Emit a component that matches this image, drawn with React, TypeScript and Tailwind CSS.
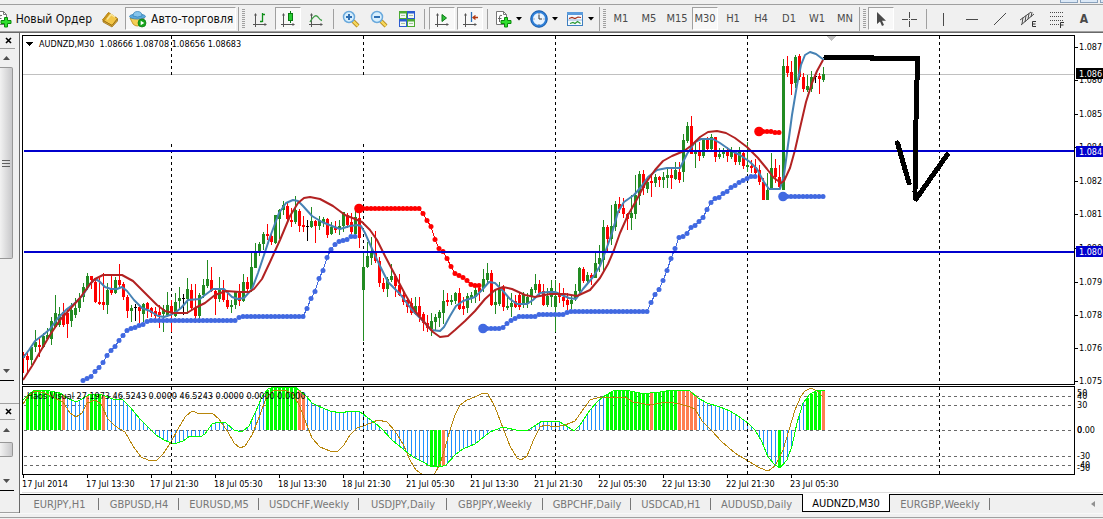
import React from "react";

type Tone = "g" | "r" | "k";
type Candle = [high: number, top: number, bottom: number, low: number, tone: Tone];
type Point = [x: number, y: number];

const STEP = 4;
const FIRST_X = 23;

const candles: Candle[] = [
  [352, 354, 358, 373, "r"], [353, 356, 360, 373, "r"], [345, 347, 360, 365, "g"], [330, 342, 347, 352, "g"],
  [338, 345, 347, 357, "r"], [333, 336, 347, 348, "g"], [328, 335, 339, 340, "g"], [317, 321, 339, 345, "g"],
  [295, 313, 327, 328, "g"], [307, 314, 325, 327, "g"], [303, 312, 325, 327, "r"], [309, 313, 324, 338, "r"],
  [303, 310, 321, 327, "g"], [298, 308, 315, 318, "g"], [293, 298, 308, 312, "g"], [283, 287, 297, 302, "g"],
  [273, 276, 288, 290, "g"], [276, 276, 280, 289, "r"], [280, 282, 302, 303, "r"], [278, 302, 304, 305, "r"],
  [273, 302, 305, 310, "r"], [283, 290, 305, 314, "g"], [275, 289, 293, 295, "r"], [277, 280, 293, 294, "g"],
  [264, 280, 285, 288, "r"], [282, 284, 297, 300, "r"], [295, 297, 311, 318, "r"], [305, 308, 311, 322, "g"],
  [304, 307, 308, 321, "k"], [305, 307, 311, 323, "r"], [303, 304, 314, 322, "g"], [302, 303, 309, 318, "r"],
  [307, 308, 313, 317, "r"], [307, 311, 316, 322, "r"], [305, 312, 315, 328, "r"], [305, 309, 314, 332, "g"],
  [292, 305, 315, 317, "g"], [300, 306, 313, 332, "r"], [293, 302, 316, 317, "g"], [287, 298, 301, 310, "g"],
  [294, 298, 299, 315, "k"], [278, 289, 299, 314, "g"], [284, 290, 308, 311, "r"], [284, 308, 316, 323, "r"],
  [293, 295, 316, 323, "g"], [279, 285, 295, 298, "g"], [260, 279, 286, 288, "g"], [267, 280, 291, 292, "r"],
  [288, 291, 299, 315, "r"], [277, 288, 299, 302, "g"], [280, 290, 300, 302, "r"], [293, 300, 307, 309, "r"],
  [300, 305, 307, 313, "g"], [291, 292, 305, 309, "g"], [284, 293, 301, 306, "r"], [274, 282, 301, 302, "g"],
  [277, 282, 289, 293, "r"], [253, 267, 289, 292, "g"], [243, 253, 268, 268, "g"], [242, 244, 252, 256, "g"],
  [232, 234, 244, 250, "g"], [224, 234, 236, 240, "r"], [232, 236, 242, 245, "r"], [215, 215, 243, 244, "g"],
  [209, 210, 219, 239, "g"], [201, 205, 210, 215, "g"], [202, 206, 219, 222, "r"], [208, 220, 222, 227, "r"],
  [196, 210, 222, 224, "g"], [209, 211, 226, 232, "r"], [216, 225, 227, 232, "r"], [220, 226, 227, 241, "k"],
  [207, 221, 227, 228, "g"], [220, 221, 226, 243, "r"], [216, 220, 226, 230, "g"], [217, 219, 222, 227, "g"],
  [218, 219, 235, 238, "r"], [222, 227, 234, 235, "g"], [221, 227, 230, 233, "r"], [220, 226, 228, 235, "g"],
  [212, 212, 226, 232, "g"], [213, 215, 225, 228, "r"], [213, 222, 232, 234, "r"], [207, 217, 234, 237, "g"],
  [213, 218, 238, 248, "r"], [252, 267, 290, 341, "g"], [242, 256, 267, 268, "g"], [237, 253, 258, 265, "g"],
  [231, 252, 261, 263, "r"], [257, 261, 283, 287, "r"], [278, 283, 289, 292, "r"], [277, 279, 289, 297, "g"],
  [264, 276, 280, 282, "g"], [274, 276, 286, 297, "r"], [274, 285, 295, 296, "r"], [292, 295, 302, 305, "r"],
  [297, 300, 307, 313, "r"], [298, 303, 313, 315, "r"], [297, 306, 314, 315, "g"], [297, 306, 316, 322, "r"],
  [312, 314, 323, 331, "r"], [315, 323, 328, 332, "r"], [313, 321, 329, 336, "g"], [314, 317, 322, 330, "g"],
  [310, 312, 318, 327, "g"], [290, 301, 313, 324, "g"], [293, 300, 302, 306, "r"], [295, 300, 302, 305, "g"],
  [292, 293, 301, 304, "g"], [288, 293, 309, 310, "r"], [297, 306, 309, 315, "r"], [293, 296, 308, 313, "g"],
  [292, 295, 298, 303, "g"], [287, 290, 297, 303, "g"], [285, 288, 292, 301, "r"], [269, 279, 288, 292, "g"],
  [263, 273, 280, 283, "g"], [270, 273, 305, 306, "r"], [290, 302, 305, 314, "g"], [282, 288, 304, 306, "g"],
  [285, 288, 307, 311, "r"], [295, 306, 308, 310, "g"], [293, 303, 307, 317, "g"], [295, 301, 307, 308, "r"],
  [292, 295, 307, 310, "r"], [292, 295, 305, 308, "g"], [293, 297, 304, 308, "g"], [287, 289, 297, 305, "g"],
  [274, 284, 290, 293, "g"], [280, 284, 293, 296, "r"], [284, 291, 305, 306, "r"], [288, 296, 305, 307, "g"],
  [280, 288, 297, 307, "g"], [280, 296, 307, 332, "g"], [283, 294, 297, 303, "r"], [288, 297, 301, 307, "r"],
  [293, 300, 305, 310, "r"], [295, 300, 304, 309, "g"], [284, 291, 299, 301, "g"], [267, 268, 291, 293, "g"],
  [267, 269, 281, 283, "r"], [272, 275, 281, 283, "g"], [273, 275, 278, 285, "r"], [252, 263, 278, 278, "g"],
  [245, 258, 264, 272, "g"], [220, 227, 260, 272, "g"], [225, 227, 239, 253, "r"], [205, 226, 239, 245, "g"],
  [201, 204, 227, 231, "g"], [197, 204, 209, 213, "r"], [198, 208, 214, 218, "r"], [213, 214, 219, 230, "r"],
  [195, 213, 218, 230, "g"], [175, 195, 214, 219, "g"], [171, 174, 196, 205, "g"], [170, 174, 188, 195, "r"],
  [177, 182, 189, 193, "g"], [173, 181, 183, 197, "r"], [174, 177, 183, 187, "g"], [176, 177, 180, 187, "r"],
  [172, 177, 180, 188, "g"], [168, 175, 178, 188, "g"], [169, 175, 178, 189, "r"], [162, 170, 179, 180, "g"],
  [162, 172, 180, 183, "r"], [134, 140, 172, 182, "g"], [122, 126, 141, 143, "g"], [116, 126, 154, 154, "r"],
  [142, 152, 154, 168, "g"], [142, 151, 156, 161, "r"], [138, 140, 156, 158, "g"], [137, 139, 149, 152, "r"],
  [134, 137, 149, 151, "g"], [137, 137, 157, 162, "r"], [148, 154, 157, 159, "g"], [148, 151, 154, 158, "g"],
  [147, 151, 156, 162, "r"], [147, 150, 157, 159, "g"], [150, 153, 162, 165, "r"], [147, 151, 162, 165, "g"],
  [150, 153, 166, 169, "r"], [142, 165, 167, 172, "g"], [160, 166, 168, 173, "r"], [159, 167, 173, 177, "r"],
  [165, 170, 182, 185, "r"], [178, 182, 200, 200, "r"], [173, 190, 200, 200, "g"], [153, 168, 189, 190, "g"],
  [159, 168, 177, 183, "r"], [165, 177, 187, 189, "r"], [59, 66, 190, 190, "g"], [56, 66, 73, 77, "r"],
  [61, 72, 84, 95, "r"], [55, 57, 83, 88, "g"], [54, 56, 77, 80, "r"], [73, 77, 89, 92, "r"],
  [75, 86, 90, 92, "g"], [71, 77, 89, 92, "g"], [73, 76, 77, 83, "k"], [73, 76, 79, 94, "r"],
  [67, 74, 80, 82, "g"],
];

const fastAverage: Point[] = [
  [23, 358], [29, 350], [35, 341], [43, 335], [50, 329], [58, 318], [67, 309], [75, 303], [83, 295], [90, 284],
  [95, 279], [99, 281], [105, 287], [111, 289], [117, 289], [122, 287], [127, 291], [134, 300], [142, 308],
  [150, 311], [158, 316], [164, 317], [170, 315], [176, 312], [181, 308], [188, 300], [200, 299], [205, 295],
  [213, 289], [224, 289], [232, 297], [238, 299], [244, 298], [252, 289], [258, 273], [263, 258], [270, 237],
  [279, 213], [286, 203], [293, 200], [298, 201], [303, 206], [312, 216], [322, 222], [332, 226], [340, 229],
  [350, 226], [357, 225], [361, 226], [365, 233], [373, 251], [380, 266], [388, 282], [400, 294], [412, 310],
  [425, 323], [431, 330], [440, 331], [444, 327], [450, 316], [456, 306], [463, 301], [475, 297], [482, 290],
  [489, 282], [495, 283], [503, 291], [510, 299], [517, 304], [527, 304], [533, 300], [540, 293], [548, 292],
  [555, 292], [562, 295], [569, 298], [576, 299], [583, 289], [593, 277], [600, 266], [606, 250], [612, 233],
  [618, 212], [624, 202], [634, 195], [641, 187], [648, 177], [657, 170], [667, 168], [680, 168], [687, 154],
  [695, 142], [701, 139], [713, 139], [720, 143], [730, 150], [740, 155], [750, 162], [757, 169], [764, 182],
  [769, 189], [780, 189], [784, 175], [788, 145], [792, 115], [797, 85], [801, 65], [805, 55], [810, 52],
  [816, 54], [824, 60],
];

const slowAverage: Point[] = [
  [23, 380], [32, 366], [40, 352], [50, 335], [60, 320], [70, 309], [80, 298], [90, 284], [95, 279], [103, 275],
  [122, 275], [133, 281], [145, 293], [157, 305], [165, 311], [173, 313], [187, 313], [195, 308], [205, 303],
  [215, 295], [226, 291], [240, 292], [249, 292], [254, 289], [262, 279], [270, 262], [280, 240], [290, 216],
  [298, 203], [304, 198], [310, 197], [320, 199], [333, 206], [345, 215], [355, 219], [362, 222], [370, 230],
  [377, 240], [385, 256], [395, 275], [405, 294], [415, 311], [425, 323], [433, 332], [440, 337], [448, 336],
  [455, 330], [465, 321], [475, 311], [485, 299], [495, 290], [503, 287], [512, 289], [525, 295], [535, 297],
  [550, 294], [565, 294], [577, 296], [590, 290], [600, 278], [608, 264], [614, 250], [620, 233], [628, 215],
  [636, 201], [645, 184], [655, 170], [663, 161], [672, 156], [684, 151], [692, 145], [700, 137], [708, 132],
  [717, 131], [726, 133], [735, 138], [747, 147], [758, 158], [767, 169], [774, 178], [781, 183], [784, 181],
  [790, 168], [795, 150], [800, 128], [806, 102], [812, 83], [817, 71], [823, 60],
];

const flat = (count: number, y: number): number[] => Array.from({ length: count }, () => y);

type Trail = { start: number; ys: number[]; color: string; opensTrend: boolean };

const trails: Trail[] = [
  {
    start: 83,
    color: "#4169e1",
    opensTrend: false,
    ys: [
      380, 378, 376, 371, 367, 362, 355, 350, 346, 340, 335, 330, 328, 327, 325, 324, 321, ...flat(22, 320), 317,
      ...flat(16, 316), 308, 298, 291, 278, 270, 257, 249, 244, 241, 240, 239, 236, 236,
    ],
  },
  {
    start: 359,
    color: "#ff0000",
    opensTrend: true,
    ys: [...flat(16, 208), 213, 220, 226, 239, 248, 251, 258, 266, 273, 275, 277, 280, 284, 285, 285],
  },
  {
    start: 483,
    color: "#4169e1",
    opensTrend: true,
    ys: [
      ...flat(5, 328), 327, 323, 320, 318, ...flat(5, 316), ...flat(7, 314), 312, ...flat(20, 311), 302, 294, 289,
      280, 270, 258, 248, 237, 236, 233, 227, 225, 221, 217, 209, 202, 198, 197, 193, 191, 187, 185, 182, 180, 178,
      176, 176,
    ],
  },
  { start: 759, color: "#ff0000", opensTrend: true, ys: [131, 131, 131, 131, 132, 132] },
  { start: 783, color: "#4169e1", opensTrend: true, ys: flat(11, 196) },
];

const oscillator: Point[] = [
  [23, 400], [28, 395], [33, 391], [38, 390], [50, 391], [60, 393], [67, 398], [76, 402], [82, 399], [90, 394],
  [102, 395], [113, 399], [122, 399], [130, 407], [140, 419], [148, 427], [156, 435], [164, 440], [174, 444],
  [183, 441], [190, 436], [200, 437], [205, 434], [212, 424], [218, 422], [226, 423], [234, 430], [242, 432],
  [249, 426], [255, 413], [262, 397], [268, 389], [275, 387], [295, 387], [300, 391], [306, 396], [312, 403],
  [318, 406], [330, 411], [341, 413], [350, 411], [359, 411], [363, 414], [375, 423], [382, 429], [392, 440],
  [403, 449], [413, 457], [423, 462], [430, 466], [440, 467], [446, 465], [455, 455], [463, 449], [475, 444],
  [485, 436], [490, 432], [503, 427], [520, 431], [528, 430], [533, 427], [542, 421], [550, 421], [560, 422],
  [568, 427], [574, 431], [580, 425], [590, 410], [598, 401], [606, 395], [613, 391], [620, 390], [630, 391],
  [640, 393], [650, 393], [660, 392], [672, 390], [690, 391], [698, 398], [707, 403], [720, 407], [730, 411],
  [738, 416], [748, 423], [755, 430], [762, 442], [768, 457], [775, 465], [780, 468], [787, 460], [792, 446],
  [797, 423], [803, 403], [810, 394], [816, 391], [825, 390],
];

const signal: Point[] = [
  [23, 404], [28, 396], [35, 391], [45, 393], [55, 398], [63, 402], [70, 413], [76, 417], [82, 413], [87, 403],
  [95, 400], [101, 404], [108, 419], [115, 426], [125, 432], [133, 446], [141, 457], [148, 460], [157, 460],
  [163, 454], [171, 442], [178, 429], [185, 417], [192, 411], [200, 414], [212, 413], [219, 419], [228, 432],
  [234, 443], [240, 448], [245, 446], [252, 435], [260, 415], [266, 398], [274, 390], [285, 390], [293, 394],
  [300, 407], [306, 423], [312, 438], [320, 447], [330, 451], [338, 451], [344, 445], [350, 435], [357, 428],
  [366, 425], [378, 420], [387, 422], [395, 431], [403, 444], [410, 460], [416, 470], [423, 475], [434, 475],
  [440, 464], [445, 448], [450, 430], [455, 415], [460, 405], [467, 400], [475, 397], [483, 393], [488, 394],
  [495, 407], [503, 428], [510, 446], [517, 458], [521, 460], [527, 456], [534, 439], [540, 427], [545, 425],
  [555, 427], [565, 425], [575, 421], [582, 411], [590, 400], [600, 397], [625, 397], [633, 402], [645, 404],
  [655, 404], [668, 402], [680, 404], [690, 407], [695, 409], [702, 421], [712, 431], [722, 442], [735, 453],
  [748, 461], [760, 468], [768, 471], [775, 466], [783, 450], [789, 430], [795, 410], [801, 396], [805, 391],
  [811, 388], [817, 391], [823, 397],
];

const strongBars: [number, number][] = [[27, 59], [91, 99], [267, 295], [431, 439], [607, 647], [655, 675], [779, 779], [807, 819]];
const fadingBars: [number, number][] = [[63, 63], [87, 87], [103, 103], [299, 303], [443, 443], [651, 651], [679, 695], [823, 823]];

const dayBreaks = [171, 363, 555, 747, 939];
const prices: [string, number][] = [
  ["1.087", 47], ["1.086", 80], ["1.085", 114], ["1.084", 147], ["1.082", 181], ["1.081", 214], ["1.080", 248],
  ["1.079", 282], ["1.078", 315], ["1.076", 348], ["1.075", 381],
];
const times = [
  "17 Jul 2014", "17 Jul 13:30", "17 Jul 21:30", "18 Jul 05:30", "18 Jul 13:30", "18 Jul 21:30", "21 Jul 05:30",
  "21 Jul 13:30", "21 Jul 21:30", "22 Jul 05:30", "22 Jul 13:30", "22 Jul 21:30", "23 Jul 05:30",
];

const toneColor: Record<Tone, string> = { g: "#228b22", r: "#ff0000", k: "#000000" };

const within = (ranges: [number, number][], x: number) => ranges.some(([a, b]) => x >= a && x <= b);

function valueAt(points: Point[], x: number): number {
  for (let i = 1; i < points.length; i++) {
    const [x0, y0] = points[i - 1];
    const [x1, y1] = points[i];
    if (x <= x1) return Math.round(y0 + ((y1 - y0) * (x - x0)) / (x1 - x0));
  }
  return points[points.length - 1][1];
}

const toPath = (points: Point[]) => points.map(([x, y]) => `${x},${y}`).join(" ");

function PricePane() {
  return (
    <svg className="block h-full w-full" role="img" aria-label="AUDNZD M30" shapeRendering="crispEdges">
      <rect x={0} y={38} width="100%" height={1} fill="#c0c0c0" />
      <g transform="translate(-23 -36)">
        {dayBreaks.map((x) => (
          <g key={x} stroke="#000" strokeDasharray="3 3">
            {x < 400 ? (
              <>
                <line x1={x + 0.5} x2={x + 0.5} y1={36} y2={78} />
                <line x1={x + 0.5} x2={x + 0.5} y1={144} y2={384} />
              </>
            ) : (
              <line x1={x + 0.5} x2={x + 0.5} y1={36} y2={384} />
            )}
          </g>
        ))}
        {candles.map(([high, top, bottom, low, tone], i) => {
          const x = FIRST_X + i * STEP;
          return (
            <g key={x} fill={toneColor[tone]}>
              <rect x={x} y={high} width={1} height={low - high} />
              <rect x={x - 1} y={top} width={3} height={bottom - top} />
            </g>
          );
        })}
        <g fill="none" strokeWidth={2} strokeLinejoin="round" shapeRendering="auto">
          <polyline points={toPath(fastAverage)} stroke="#4682b4" />
          <polyline points={toPath(slowAverage)} stroke="#b22222" />
        </g>
        {trails.map(({ start, ys, color, opensTrend }) => (
          <g key={start} fill={color}>
            <polyline
              points={ys.map((y, i) => `${start + i * STEP},${y + 0.5}`).join(" ")}
              fill="none"
              stroke={color}
            />
            {ys.map((y, i) => (
              <circle
                key={i}
                cx={start + i * STEP}
                cy={y + 0.5}
                r={opensTrend && i === 0 ? 4.8 : 2.5}
                shapeRendering="auto"
              />
            ))}
          </g>
        ))}
        <polygon points="826,36 836,36 831,41" fill="#c0c0c0" />
        <polygon points="26,42 33,42 29.5,46" fill="#000" />
      </g>
      <rect x={1} y={114} width="100%" height={2} fill="#0000cd" />
      <rect x={1} y={215} width="100%" height={2} fill="#0000cd" />
      <g transform="translate(-23 -36)" fill="none" stroke="#000" strokeWidth={5} strokeLinecap="round" strokeLinejoin="round">
        <path d="M826 57.5H872L872 58.5H918L917 80L915.5 140L915 192L916 198" />
        <path d="M897.500 143L909 183M947 155L916 199" />
      </g>
      <text x={16} y={11} className="text-[9px]" xmlSpace="preserve">
        {"AUDNZD,M30  1.08666 1.08708 1.08656 1.08683"}
      </text>
    </svg>
  );
}

function OscillatorPane() {
  const bars = candles.map((_, i) => FIRST_X + i * STEP).slice(1);
  return (
    <svg className="block h-full w-full" role="img" aria-label="Haos Visual" shapeRendering="crispEdges">
      {[396, 405, 430, 456, 465].map((y) => (
        <line key={y} x1={1} x2="100%" y1={y - 386.5} y2={y - 386.5} stroke="#696969" strokeDasharray="3 3" />
      ))}
      <g transform="translate(-23 -387)">
        {bars.map((x) => {
          const y = valueAt(oscillator, x);
          const top = Math.min(y, 430);
          const height = Math.abs(430 - y);
          if (within(strongBars, x)) return <rect key={x} x={x - 1} y={top} width={3} height={height} fill="#00ff00" />;
          if (within(fadingBars, x)) return <rect key={x} x={x - 1} y={top} width={3} height={height} fill="#ff7f50" />;
          return <rect key={x} x={x} y={top} width={1} height={height} fill="#1e90ff" />;
        })}
        <polyline points={toPath(signal)} fill="none" stroke="#b8860b" />
        <polyline points={toPath(oscillator)} fill="none" stroke="#00ff00" />
        {dayBreaks.map((x) => (
          <line key={x} x1={x + 0.5} x2={x + 0.5} y1={387} y2={474} stroke="#000" strokeDasharray="3 3" />
        ))}
      </g>
      <text x={4} y={12} className="text-[9px]">
        Haos Visual 27.1973 46.5243 0.0000 46.5243 0.0000 0.0000 0.0000
      </text>
    </svg>
  );
}

function PriceAxis() {
  return (
    <svg className="block h-[350px] w-[28px] shrink-0 text-[9px]" role="img" aria-label="Price scale" shapeRendering="crispEdges">
      <g transform="translate(0 -35)">
        {prices.map(([label, y]) => (
          <g key={label}>
            <rect x={0} y={y} width={3} height={1} />
            <text x={4} y={y + 3}>{label}</text>
          </g>
        ))}
        <rect x={1} y={68} width={28} height={11} />
        <text x={4} y={77} fill="#fff">1.086</text>
        <rect x={1} y={146} width={28} height={11} fill="#0000cd" />
        <text x={4} y={155} fill="#fff">1.084</text>
        <rect x={1} y={246} width={28} height={11} fill="#0000cd" />
        <text x={4} y={255} fill="#fff">1.080</text>
      </g>
    </svg>
  );
}

function OscillatorAxis() {
  const labels: [string, number][] = [
    ["50", 393], ["40", 396], ["30", 405], ["0", 430], ["0.00", 430], ["-30", 456], ["-40", 465], ["-50", 468],
  ];
  return (
    <svg className="block h-[89px] w-[28px] shrink-0 text-[9px]" role="img" aria-label="Indicator scale">
      <g transform="translate(0 -386)">
        {labels.map(([label, y]) => (
          <text key={label} x={2} y={y + 3}>{label}</text>
        ))}
      </g>
    </svg>
  );
}

/* ---------- toolbar ---------- */

function Icon({ children, size = 18 }: { children: React.ReactNode; size?: number }) {
  return (
    <svg width={size} height={size} viewBox={`0 0 ${size} ${size}`} fill="none" aria-hidden="true" className="shrink-0">
      {children}
    </svg>
  );
}

const Tool = ({ label, pressed, children }: { label: string; pressed?: boolean; children: React.ReactNode }) => (
  <div className="flex w-7 shrink-0 justify-center">
    <button
      type="button"
      aria-label={label}
      aria-pressed={pressed ? true : undefined}
      className={
        pressed
          ? "flex h-[23px] w-[26px] items-center justify-center border border-white border-t-[#a0a0a0] border-l-[#a0a0a0] bg-[#f8f8f8]"
          : "flex h-[23px] w-[26px] items-center justify-center"
      }
    >
      {children}
    </button>
  </div>
);

const DropTool = ({ label, children }: { label: string; children: React.ReactNode }) => (
  <button type="button" aria-label={label} className="flex h-[23px] w-9 shrink-0 items-center gap-1 pl-[3px]">
    {children}
    <svg width="6" height="4" viewBox="0 0 6 4" aria-hidden="true"><path d="M0 0H6L3 3.500Z" fill="#000" /></svg>
  </button>
);

const Separator = () => <span className="mx-[3px] h-5 w-px shrink-0 bg-[#a0a0a0]" />;

const Grip = () => (
  <span className="mr-px ml-[3px] h-5 w-[3px] shrink-0 bg-[repeating-linear-gradient(#a0a0a0_0_1px,#f0f0f0_1px_2px)]" />
);

const Axes = () => (
  <>
    <path d="M4.500 4V17M2 14.500H15" stroke="#555" />
    <path d="M3 5.500L4.500 3L6 5.500ZM13.500 13L16 14.500L13.500 16Z" fill="#555" />
  </>
);

const Magnifier = ({ plus }: { plus?: boolean }) => (
  <Icon>
    <path d="M11 11L16 16" stroke="#a87a10" strokeWidth="4" />
    <path d="M11 11L16 16" stroke="#f5d65a" strokeWidth="2.500" />
    <circle cx="7" cy="7" r="5.500" fill="#d8effd" stroke="#6aa9dc" strokeWidth="1.500" />
    <path d={plus ? "M4 7H10M7 4V10" : "M4 7H10"} stroke="#2f6fb3" strokeWidth="2" />
  </Icon>
);

const SheetPlus = () => (
  <>
    <path d="M2.500 1.500H9.500L12.500 4.500V14.500H2.500Z" fill="#fff" stroke="#777" />
    <path d="M9.500 1.500V4.500H12.500" stroke="#777" />
    <path d="M8 5.500Q5.500 4.500 5.500 7V12M4 8.500H7.500" stroke="#666" />
    <path d="M10.500 7.500H13.500V10.500H17V13.500H13.500V17H10.500V13.500H7V10.500H10.500Z" fill="#2ee02e" stroke="#0a8a0a" />
  </>
);

function Toolbar() {
  return (
    <header className="h-[33px] shrink-0 border-b border-[#696969] bg-[#f0f0f0]">
      <div className="flex h-1 justify-end gap-[2px] overflow-hidden">
        <span className="h-[3px] w-[18px] border border-t-0 border-[#8aa2bd] bg-[#dce9f7]" />
        <span className="h-[3px] w-[18px] border border-t-0 border-[#8aa2bd] bg-[#dce9f7]" />
        <span className="h-[3px] w-[3px] border border-t-0 border-r-0 border-[#8aa2bd] bg-[#dce9f7]" />
      </div>
      <div className="flex h-7 items-center overflow-hidden border-t border-b border-[#a0a0a0] pt-px text-[#4a4a4a]">
        <button type="button" className="flex h-[23px] w-24 shrink-0 items-center justify-end pr-1 text-[12px] whitespace-nowrap text-[#101010]">
          <span className="flex w-[17px] shrink-0 justify-end overflow-hidden pr-1">
            <Icon><SheetPlus /></Icon>
          </span>
          Новый Ордер
        </button>
        <Tool label="Metaeditor">
          <Icon>
            <path d="M1.500 10L7.500 2.500L16.500 8.500L11 15.500Z" fill="#f2c648" stroke="#a8780f" />
            <path d="M1.500 10L7.500 2.500L9 3.500L3.500 11Z" fill="#c8921c" />
            <path d="M2 10.500L11 15.500L16.500 9V11L11 17L2 12Z" fill="#e5b133" stroke="#8d6410" strokeWidth=".7" />
            <path d="M6 9.500L10 4.500L14 7.200" stroke="#fae597" strokeWidth="1.500" />
          </Icon>
        </Tool>
        <button
          type="button"
          aria-pressed="true"
          className="ml-px flex h-[23px] w-[111px] shrink-0 items-center gap-1 border border-white border-t-[#a0a0a0] border-l-[#a0a0a0] bg-[#f8f8f8] pl-[3px] text-[12px] whitespace-nowrap text-[#101010]"
        >
          <Icon>
            <path d="M1 8H15L13 14Q8 18 4 14Z" fill="#f5cf55" stroke="#b98a16" strokeWidth=".8" />
            <ellipse cx="8.500" cy="6.500" rx="8" ry="2.600" fill="#5da9dc" stroke="#2e7db3" strokeWidth=".7" />
            <path d="M4 6Q4 1.500 8.500 1.500Q13 1.500 13 6Q8.500 8 4 6Z" fill="#86c5ec" stroke="#2e7db3" strokeWidth=".7" />
            <circle cx="13" cy="13" r="4" fill="#16a51c" stroke="#0b7a10" strokeWidth=".7" />
            <path d="M11.700 10.700L15.300 13L11.700 15.300Z" fill="#fff" />
          </Icon>
          Авто-торговля
        </button>
        <span className="ml-[2px] h-6 w-px shrink-0 bg-[#a0a0a0]" />
        <Grip />
        <Tool label="Bar chart"><Icon><Axes /><path d="M11.500 3V12M11.500 4.500H14M9 11.500H11.500" stroke="#0f8f1a" strokeWidth="1.300" /></Icon></Tool>
        <Tool label="Candlesticks" pressed><Icon><Axes /><path d="M11.500 1V13" stroke="#0a7a12" /><rect x="9.500" y="3.500" width="4" height="7" fill="#27cc33" stroke="#0a7a12" /></Icon></Tool>
        <Tool label="Line chart"><Icon><Axes /><path d="M3 12Q8 3 11 7Q13 10 15 10.500" stroke="#3c9c44" strokeWidth="1.300" /></Icon></Tool>
        <Separator />
        <Tool label="Zoom in"><Magnifier plus /></Tool>
        <Tool label="Zoom out"><Magnifier /></Tool>
        <Tool label="Tile windows">
          <Icon>
            <rect x="1" y="1" width="8" height="8" fill="#4caa32" /><rect x="9" y="1" width="8" height="8" fill="#2b5cd0" />
            <rect x="1" y="9" width="8" height="8" fill="#2b5cd0" /><rect x="9" y="9" width="8" height="8" fill="#4caa32" />
            <path d="M2 3.500H8V8H2ZM10 3.500H16V8H10ZM2 11.500H8V16H2ZM10 11.500H16V16H10Z" fill="#f3f8f3" />
            <path d="M3 5.500H7M11 5.500H15M3 13.500H7M11 13.500H15" stroke="#a5c3a0" />
          </Icon>
        </Tool>
        <Separator />
        <Tool label="Auto scroll" pressed><Icon><Axes /><path d="M9 4.500L13.500 8L9 11.500Z" fill="#2fc23a" stroke="#0a7a12" /></Icon></Tool>
        <Tool label="Chart shift" pressed><Icon><Axes /><path d="M10.500 2V12" stroke="#2a6fb5" strokeWidth="1.300" /><path d="M17 7.500H12M14.500 5.500L12 7.500L14.500 9.500" stroke="#b23a12" strokeWidth="1.300" /></Icon></Tool>
        <Separator />
        <DropTool label="Indicators"><Icon><SheetPlus /></Icon></DropTool>
        <DropTool label="Periods">
          <Icon>
            <circle cx="9" cy="9" r="7.300" fill="#e9f4ff" stroke="#2f80d8" strokeWidth="2.400" />
            <circle cx="9" cy="9" r="8.300" stroke="#0d4a96" strokeWidth=".7" />
            <path d="M9 4.500V9H12" stroke="#333" />
            <path d="M9 3V4M9 14V15M3.500 9H4.500M13.500 9H14.500" stroke="#667" />
          </Icon>
        </DropTool>
        <DropTool label="Templates">
          <Icon>
            <rect x="1.500" y="2.500" width="15" height="13" fill="#f5faff" stroke="#3f7fc0" />
            <rect x="1" y="2" width="16" height="3" fill="#5b9bdc" />
            <path d="M3 8.500L6 7.500L9 8.500L12 7L15 7.500" stroke="#a52d16" strokeWidth="1.200" />
            <path d="M2 10H16" stroke="#9ab8d6" />
            <path d="M4 13.500L7 12.500L9 13.500L11.500 11.500L14.500 13.500" stroke="#2b9a35" strokeWidth="1.200" />
          </Icon>
        </DropTool>
        <span className="h-6 w-px shrink-0 bg-[#a0a0a0]" />
        <Grip />
        {["M1", "M5", "M15", "M30", "H1", "H4", "D1", "W1", "MN"].map((period) => (
          <Tool key={period} label={period} pressed={period === "M30"}>
            <span className="text-[11px]">{period}</span>
          </Tool>
        ))}
        <span className="h-6 w-px shrink-0 bg-[#a0a0a0]" />
        <Grip />
        <Tool label="Cursor" pressed><Icon><path d="M5 2V14L8 11.500L10 16L12 15L10 10.700H14Z" fill="#4a4a4a" /></Icon></Tool>
        <Tool label="Crosshair"><Icon><path d="M9.500 2V8M9.500 11V17M2 9.500H8M11 9.500H17" stroke="#4a4a4a" /><path d="M9 9h1v1H9z" fill="#4a4a4a" /></Icon></Tool>
        <Separator />
        <Tool label="Vertical line"><Icon><path d="M8.500 3V16" stroke="#4a4a4a" /></Icon></Tool>
        <Tool label="Horizontal line"><Icon><path d="M3 9.500H15" stroke="#4a4a4a" /></Icon></Tool>
        <Tool label="Trendline"><Icon><path d="M3 15L15 3" stroke="#4a4a4a" /></Icon></Tool>
        <Tool label="Equidistant channel">
          <Icon>
            <path d="M1 10L12 2M2 15L15 4M4 7.500L3 14M7 5.500L6 12M10 3.500L9 9M13 2L12 7" stroke="#4a4a4a" />
            <path d="M17 11.500H13.500V16.500H17M13.500 14H16.500" stroke="#333" />
          </Icon>
        </Tool>
        <Tool label="Fibonacci retracement">
          <Icon>
            <path d="M3 2.500H17M3 6.500H17M3 10.500H17M3 14.500H12" stroke="#4a4a4a" strokeDasharray="1 1" />
            <path d="M13.500 18V12.500H17M13.500 15H16.500" stroke="#333" />
          </Icon>
        </Tool>
        <Tool label="Text"><span className="text-[12px] font-bold">A</span></Tool>
      </div>
    </header>
  );
}

/* ---------- docked panels ---------- */

const ScrollArrow = ({ up }: { up?: boolean }) => (
  <button type="button" aria-label={up ? "Scroll up" : "Scroll down"} className="flex h-[18px] w-3 shrink-0 items-center justify-center">
    <svg width="7" height="4" viewBox="0 0 7 4" aria-hidden="true">
      <path d={up ? "M0 4L3.500 0L7 4Z" : "M0 0H7L3.500 4Z"} fill="#505050" />
    </svg>
  </button>
);

const PanelHead = () => (
  <div className="mr-1 flex h-4 shrink-0 items-center justify-end border-b border-[#a0a0a0] pr-[3px]">
    <button type="button" aria-label="Close panel">
      <svg width="7" height="7" viewBox="0 0 7 7" aria-hidden="true"><path d="M1 1L6 6M6 1L1 6" stroke="#000" strokeWidth="1.600" /></svg>
    </button>
  </div>
);

const thumb = "rounded-r-[2px] border border-l-0 border-[#979797] bg-linear-to-r from-[#f2f2f2] to-[#c8c8ca]";

function Dock() {
  return (
    <aside className="flex w-[19px] shrink-0 flex-col bg-[#f0f0f0]">
      <section aria-label="Market watch" className="flex flex-1 flex-col">
        <PanelHead />
        <div className="mr-[5px] flex flex-1 flex-col border-b border-black">
          <ScrollArrow up />
          <div className="flex flex-1 flex-col">
            <div className={`flex h-[192px] w-[13px] flex-col items-center justify-center gap-[2px] ${thumb}`}>
              <span className="h-px w-2 bg-[#606060]" />
              <span className="h-px w-2 bg-[#606060]" />
              <span className="h-px w-2 bg-[#606060]" />
            </div>
          </div>
          <ScrollArrow />
        </div>
      </section>
      <section aria-label="Navigator" className="mt-[22px] flex h-[88px] flex-col border-t border-[#a0a0a0]">
        <PanelHead />
        <div className="mr-[5px] flex flex-1 flex-col border-b border-black pt-px">
          <ScrollArrow up />
          <div className="flex flex-1 flex-col pt-[3px]">
            <div className={`h-[15px] w-[13px] ${thumb}`} />
          </div>
          <ScrollArrow />
        </div>
      </section>
      <div className="h-[22px] shrink-0 border-b border-[#a0a0a0]" />
    </aside>
  );
}

/* ---------- chart tabs ---------- */

const tabs: [string, string][] = [
  ["EURJPY,H1", "w-[79px]"], ["GBPUSD,H4", "w-20"], ["EURUSD,M5", "w-20"], ["USDCHF,Weekly", "w-25"],
  ["USDJPY,Daily", "w-22"], ["GBPJPY,Weekly", "w-24"], ["GBPCHF,Daily", "w-22"], ["USDCAD,H1", "w-20"],
  ["AUDUSD,Daily", "w-[91px]"], ["AUDNZD,M30", "w-22"], ["EURGBP,Weekly", "w-25"],
];

function ChartTabs() {
  return (
    <nav className="flex h-[19px] items-start border-t border-black bg-[#f0f0f0] text-[11px] text-[#777]" aria-label="Charts">
      <div role="tablist" className="flex">
        {tabs.map(([name, width], i) => {
          const active = name === "AUDNZD,M30";
          const nextActive = tabs[i + 1]?.[0] === "AUDNZD,M30";
          return (
            <button
              key={name}
              type="button"
              role="tab"
              aria-selected={active}
              className={`relative flex h-[18px] shrink-0 items-center justify-center whitespace-nowrap ${width} ${
                active ? "-mt-px border border-t-0 border-black bg-white pt-px text-black" : ""
              }`}
            >
              {name}
              {!active && !nextActive && <span className="absolute top-[3px] right-0 h-3 w-px bg-[#777]" />}
            </button>
          );
        })}
      </div>
      <button type="button" aria-label="Scroll tabs left" className="mt-[6px] mr-2 ml-auto">
        <svg width="4" height="6" viewBox="0 0 4 6" aria-hidden="true"><path d="M4 0V6L0 3Z" fill="#909090" /></svg>
      </button>
    </nav>
  );
}

export default function App() {
  return (
    <div className="flex min-h-screen flex-col overflow-hidden bg-[#f0f0f0] font-['DejaVu_Sans_Condensed','Noto_Sans',sans-serif] leading-none">
      <Toolbar />
      <div className="flex flex-1">
        <Dock />
        <main className="flex min-w-0 flex-1 flex-col border-l border-[#696969] bg-[#f0f0f0]">
          <div className="bg-white pt-[2px] pl-[2px]">
            <div className="flex">
              <div className="h-[350px] min-w-0 flex-1 border border-black"><PricePane /></div>
              <PriceAxis />
            </div>
            <div className="mt-px flex">
              <div className="h-[89px] min-w-0 flex-1 border border-black"><OscillatorPane /></div>
              <OscillatorAxis />
            </div>
            <ol className="flex h-[17px] overflow-hidden text-[9px] text-black">
              {times.map((time) => (
                <li key={time} className="w-16 shrink-0 whitespace-nowrap">
                  <span className="ml-px block h-[3px] w-px bg-black" />
                  <time className="block pt-[2px]">{time}</time>
                </li>
              ))}
            </ol>
            <div className="h-[2px] border-t border-[#dcdcdc]" />
          </div>
          <ChartTabs />
        </main>
      </div>
      <footer className="h-[6px] shrink-0 border-t border-[#f8f8f8]">
        <div className="mt-[3px] h-px bg-[#a0a0a0]" />
      </footer>
    </div>
  );
}
